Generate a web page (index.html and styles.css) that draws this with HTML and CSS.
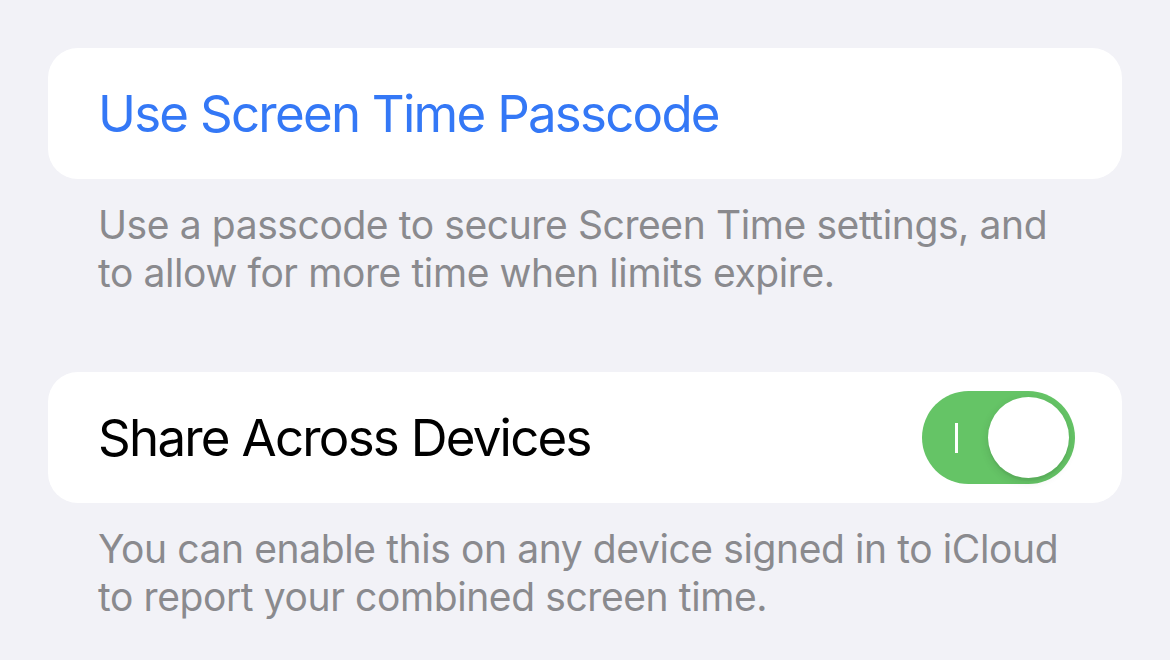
FILE: index.html
```html
<!DOCTYPE html>
<html lang="en">
<head>
<meta charset="utf-8">
<title>Screen Time</title>
<link rel="stylesheet" href="styles.css">
</head>
<body>
  <main class="page">
    <section class="group">
      <div class="card">
        <span class="link">Use Screen Time Passcode</span>
      </div>
      <p class="footer">Use a passcode to secure Screen Time settings, and<br>to allow for more time when limits expire.</p>
    </section>
    <section class="group group-second">
      <div class="card">
        <span class="label">Share Across Devices</span>
        <div class="switch" role="switch" aria-checked="true">
          <span class="switch-mark"></span>
          <span class="knob"></span>
        </div>
      </div>
      <p class="footer">You can enable this on any device signed in to iCloud<br>to report your combined screen time.</p>
    </section>
  </main>
</body>
</html>
```
FILE: styles.css
```css
html, body {
  margin: 0;
  padding: 0;
}
body {
  background: #f2f2f7;
  font-family: Inter, "Liberation Sans", sans-serif;
  width: 1170px;
  height: 660px;
  overflow: hidden;
}
.page {
  padding: 48px 48px 0 48px;
  display: flex;
  flex-direction: column;
}
.group-second {
  margin-top: 75px;
}
.card {
  background: #ffffff;
  border-radius: 30px;
  height: 131px;
  display: flex;
  align-items: center;
  justify-content: space-between;
  padding: 0 47px 0 50px;
}
.link {
  color: #3478f6;
  font-size: 51px;
  letter-spacing: -1.75px;
}
.label {
  color: #000000;
  font-size: 51px;
  letter-spacing: -1.75px;
}
.footer {
  margin: 0;
  padding: 22px 0 0 50px;
  color: #8a8a8e;
  font-size: 39px;
  line-height: 48px;
  letter-spacing: -0.4px;
}
.switch {
  position: relative;
  width: 153px;
  height: 93px;
  border-radius: 47px;
  background: #65c466;
}
.switch-mark {
  position: absolute;
  left: 33px;
  top: 32px;
  width: 3px;
  height: 30px;
  background: #ffffff;
}
.knob {
  position: absolute;
  right: 6px;
  top: 6px;
  width: 81px;
  height: 81px;
  border-radius: 50%;
  background: #ffffff;
  box-shadow: 0 3px 10px rgba(0, 0, 0, 0.12), 0 3px 1px rgba(0, 0, 0, 0.04);
}
```
